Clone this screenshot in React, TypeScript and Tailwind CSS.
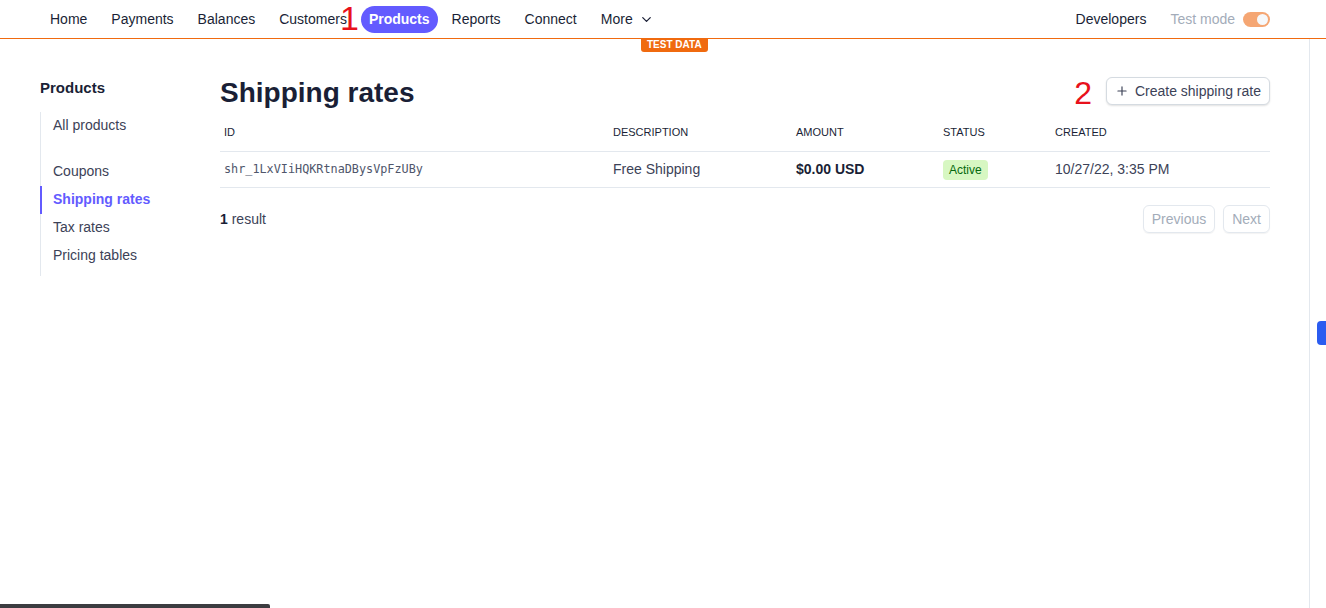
import { Plus, ChevronDown } from "lucide-react";

// ─── Data ─────────────────────────────────────────────────────────────────────

const NAV_ITEMS = ["Home", "Payments", "Balances", "Customers", "Products", "Reports", "Connect"];

const SIDE_ITEMS = [
    { label: "All products", gap: true },
    { label: "Coupons" },
    { label: "Shipping rates", active: true },
    { label: "Tax rates" },
    { label: "Pricing tables" },
];

const COLS = "grid grid-cols-[389px_183px_147px_112px_1fr]";

// ─── Top bar ──────────────────────────────────────────────────────────────────

function TopNav() {
    return (
        <header className="relative flex h-[39px] items-center border-b border-[#f06a0f] pl-[41px] pr-[56px]">
            <nav className="flex items-center">
                {NAV_ITEMS.map((item) => (
                    <span
                        key={item}
                        className={
                            item === "Products"
                                ? "ml-[2px] mr-[2px] rounded-full bg-[#635bff] px-[8px] py-[3px] text-[14px] font-bold text-white"
                                : "px-[12px] py-[3px] text-[14px] text-[#1a1f36] first:pl-[9px]"
                        }
                    >
                        {item}
                    </span>
                ))}
                <span className="flex items-center gap-[6px] px-[12px] py-[3px] text-[14px] text-[#1a1f36]">
                    More
                    <ChevronDown size={15} strokeWidth={2} />
                </span>
            </nav>

            {/* annotation 1 */}
            <span className="absolute left-[340px] top-[1px] text-[34px] leading-none text-[#e8111b]">1</span>

            <div className="ml-auto flex items-center">
                <span className="text-[14px] text-[#1a1f36]">Developers</span>
                <span className="ml-[24px] text-[14px] text-[#a3acb9]">Test mode</span>
                <span className="ml-[8px] flex h-[15px] w-[27px] items-center justify-end rounded-full bg-[#f5a673] px-[2px]">
                    <span className="h-[11px] w-[11px] rounded-full bg-[#f6f8fa]" />
                </span>
            </div>

            <span className="absolute left-[641px] top-[38px] rounded-b-[3px] bg-[#f06a0f] px-[6px] py-[1px] text-[10px] font-bold leading-[12px] text-white">
                TEST DATA
            </span>
        </header>
    );
}

// ─── Sidebar ──────────────────────────────────────────────────────────────────

function Sidebar() {
    return (
        <aside className="w-[180px] shrink-0 pt-[38px]">
            <h2 className="text-[15px] font-bold text-[#1a1f36]">Products</h2>
            <ul className="mt-[12px] border-l border-[#e3e8ee] pb-[6px]">
                {SIDE_ITEMS.map((it) => (
                    <li
                        key={it.label}
                        className={`-ml-px flex h-[28px] items-center border-l-2 pl-[11px] text-[14px] ${it.active
                            ? "border-[#635bff] font-bold text-[#635bff]"
                            : "border-transparent text-[#3c4257]"
                            } ${it.gap ? "mb-[18px]" : ""}`}
                    >
                        {it.label}
                    </li>
                ))}
            </ul>
        </aside>
    );
}

// ─── Main ─────────────────────────────────────────────────────────────────────

function ShippingRates() {
    return (
        <main className="w-[1050px] pt-[36px]">
            <div className="relative flex items-start justify-between">
                <h1 className="text-[28px] font-bold leading-[36px] text-[#1a1f36]">Shipping rates</h1>
                <span className="absolute right-[178px] top-0 text-[32px] leading-[36px] text-[#e8111b]">2</span>
                <button className="mt-[2px] flex h-[28px] items-center gap-[6px] rounded-[6px] border border-[#d5dbe1] bg-white px-[8px] text-[14px] text-[#3c4257] shadow-[0_1px_2px_rgba(0,0,0,0.12)]">
                    <Plus size={14} strokeWidth={2} />
                    Create shipping rate
                </button>
            </div>

            <div className={`${COLS} mt-[7px] h-[34px] items-center border-b border-[#e3e8ee] pb-[4px] text-[11px] text-[#1a1f36]`}>
                <span className="px-1">ID</span>
                <span className="px-1">DESCRIPTION</span>
                <span className="px-1">AMOUNT</span>
                <span className="px-1">STATUS</span>
                <span className="px-1">CREATED</span>
            </div>

            <div className={`${COLS} h-[36px] items-center border-b border-[#e3e8ee] text-[14px] text-[#3c4257]`}>
                <span className="px-1 font-['DejaVu_Sans_Mono',monospace] text-[11.8px] text-[#4f566b]">
                    shr_1LxVIiHQKRtnaDBysVpFzUBy
                </span>
                <span className="px-1">Free Shipping</span>
                <span className="px-1 font-bold text-[#1a1f36]">$0.00 USD</span>
                <span className="px-1">
                    <span className="inline-block rounded-[4px] bg-[#d7f7c2] px-[6px] py-[1px] text-[12px] font-medium text-[#05690d]">
                        Active
                    </span>
                </span>
                <span className="px-1">10/27/22, 3:35 PM</span>
            </div>

            <div className="mt-[17px] flex items-center justify-between">
                <span className="text-[14px] text-[#3c4257]">
                    <b className="text-[#1a1f36]">1</b> result
                </span>
                <div className="flex gap-[8px]">
                    <button className="h-[28px] rounded-[6px] border border-[#e3e8ee] px-[8px] text-[14px] text-[#a3acb9] shadow-[0_1px_1px_rgba(0,0,0,0.05)]">
                        Previous
                    </button>
                    <button className="h-[28px] rounded-[6px] border border-[#e3e8ee] px-[8px] text-[14px] text-[#a3acb9] shadow-[0_1px_1px_rgba(0,0,0,0.05)]">
                        Next
                    </button>
                </div>
            </div>
        </main>
    );
}

// ─── App ──────────────────────────────────────────────────────────────────────

export default function App() {
    return (
        <div className="relative h-[608px] w-[1326px] overflow-hidden bg-white font-['Liberation_Sans',Arial,sans-serif]">
            <TopNav />
            <div className="flex h-[569px]">
                <div className="flex flex-1 border-r border-[#e3e8ee] pl-[40px]">
                    <Sidebar />
                    <ShippingRates />
                </div>
                <div className="relative w-[16px]">
                    <span className="absolute left-[7px] top-[282px] h-[24px] w-[12px] rounded-l-[4px] bg-[#2b5cf0]" />
                </div>
            </div>
            {/* bottom drag handle */}
            <span className="absolute bottom-0 left-0 h-[4px] w-[270px] rounded-tr-[2px] bg-[#3c3c40]" />
        </div>
    );
}
